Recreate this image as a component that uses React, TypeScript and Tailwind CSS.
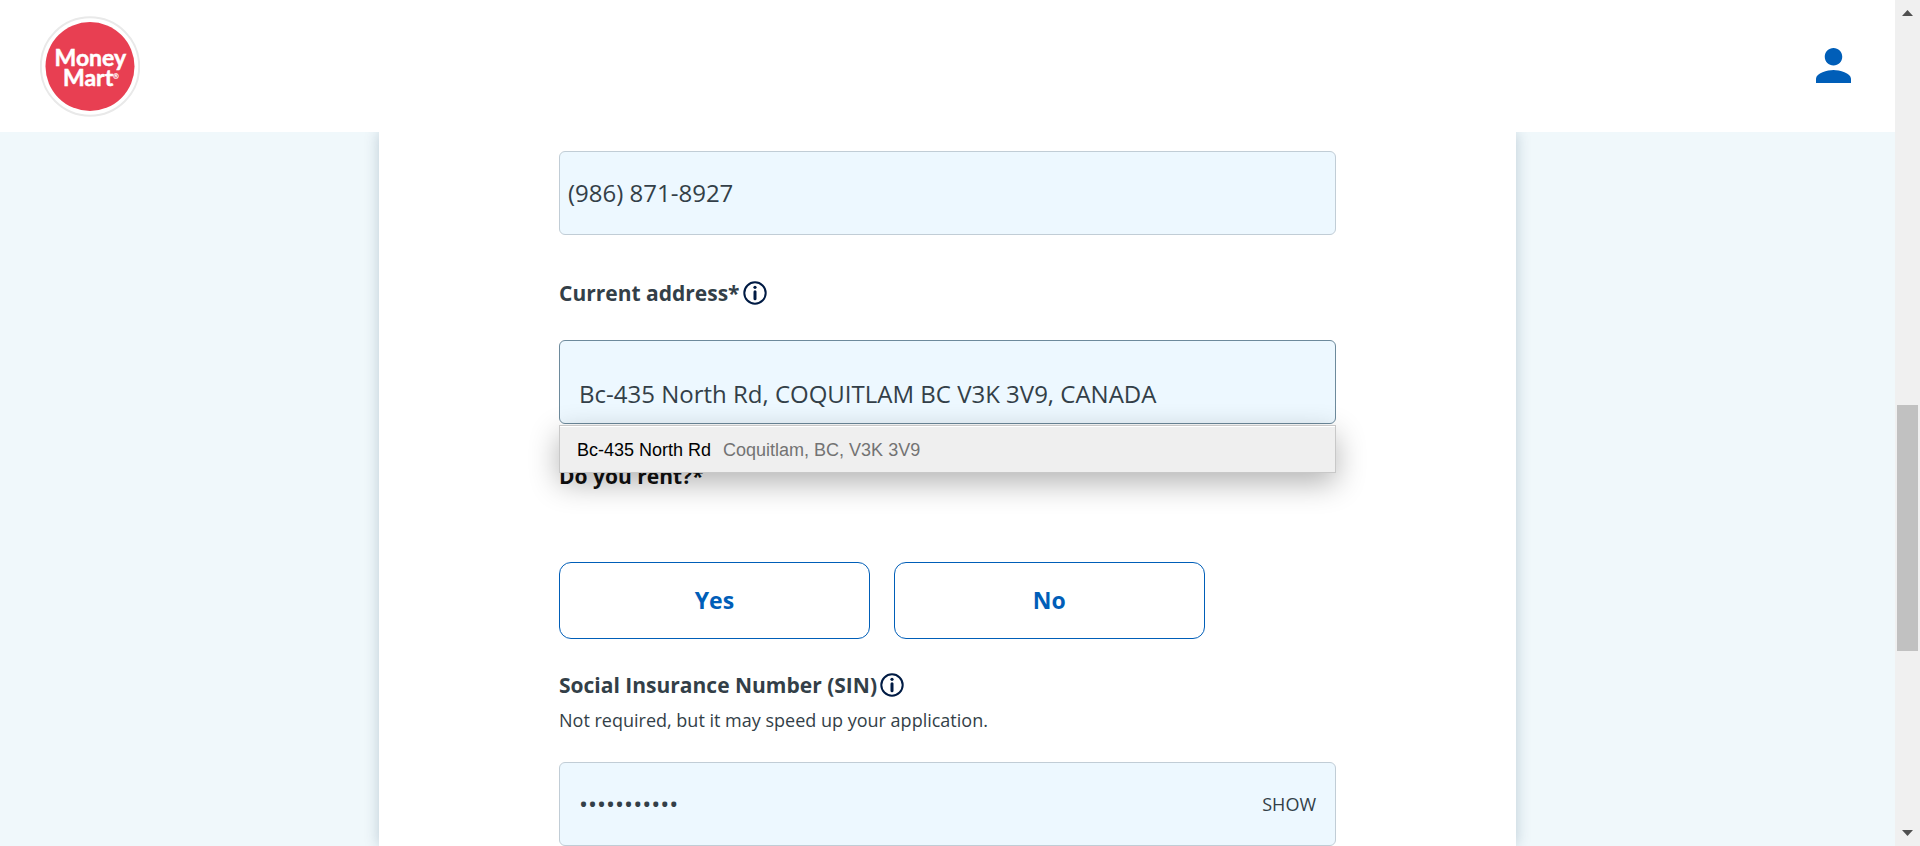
import { useState } from "react";

function Logo() {
  return (
    <svg viewBox="0 0 100 102" className="h-[102px] w-[100px]" role="img" aria-label="Money Mart">
      <circle cx="50" cy="51.500" r="49.200" fill="#fff" stroke="#e9e9e9" strokeWidth="2" />
      <circle cx="50" cy="51.500" r="44.500" fill="#e83f52" />
      <g fill="#fff" stroke="#fff" strokeWidth="0.500" fontFamily="Lato, 'Open Sans', sans-serif" fontWeight="700">
        <text x="14.500" y="51" fontSize="23">Money</text>
        <text x="23" y="71" fontSize="23">Mart</text>
        <text x="73" y="64" fontSize="7" fontWeight="400" strokeWidth="0.200">®</text>
      </g>
    </svg>
  );
}

function UserIcon() {
  return (
    <svg viewBox="4 4 16 16" className="size-[35px]" fill="#005eb8" aria-hidden="true">
      <path d="M12 12c2.210 0 4-1.790 4-4s-1.790-4-4-4-4 1.790-4 4 1.790 4 4 4zm0 2c-2.670 0-8 1.340-8 4v2h16v-2c0-2.660-5.330-4-8-4z" />
    </svg>
  );
}

function InfoButton({ label }: { label: string }) {
  return (
    <button type="button" aria-label={label} className="size-6">
      <svg viewBox="0 0 24 24" className="size-6" fill="none" stroke="#001b44" aria-hidden="true">
        <circle cx="12" cy="12" r="10.700" strokeWidth="2" />
        <path d="M12 10.800v7" strokeWidth="3" strokeLinecap="round" />
        <circle cx="12" cy="6.300" r="1.600" fill="#001b44" stroke="none" />
      </svg>
    </button>
  );
}

function Scrollbar() {
  return (
    <div className="flex w-[25px] shrink-0 flex-col items-center justify-between bg-[#f0f0f0] py-2.5" aria-hidden="true">
      <svg viewBox="0 0 11 6" className="h-1.5 w-[11px]" fill="#505050">
        <path d="M0 6L5.500 0L11 6z" />
      </svg>
      <div className="flex w-full flex-1 flex-col px-0.5">
        <div className="grow-[389]" />
        <div className="grow-[246] bg-[#c1c1c1]" />
        <div className="grow-[179]" />
      </div>
      <svg viewBox="0 0 11 6" className="h-1.5 w-[11px]" fill="#505050">
        <path d="M0 0L5.500 6L11 0z" />
      </svg>
    </div>
  );
}

export default function App() {
  const [phone, setPhone] = useState("(986) 871-8927");
  const [address, setAddress] = useState("Bc-435 North Rd, COQUITLAM BC V3K 3V9, CANADA");
  const [sin, setSin] = useState("123-456-789");
  const [visible, setVisible] = useState(false);

  return (
    <div className="flex h-screen overflow-hidden bg-white font-['Open_Sans',sans-serif] text-[#333f48]">
      <div className="flex min-w-0 flex-1 flex-col">
        <header className="z-10 flex h-[132px] shrink-0 items-center justify-between bg-white pr-11 pl-10">
          <a href="#home">
            <Logo />
          </a>
          <button type="button" aria-label="Account" className="pb-0.5">
            <UserIcon />
          </button>
        </header>
        <main className="flex min-h-0 flex-1 justify-center overflow-hidden bg-[#f0f8fb]">
          <form className="w-3/5 bg-white px-[180px] pt-[19px] shadow-[0_0_14px_rgba(0,50,80,0.22)]">
            <input
              type="tel"
              aria-label="Phone number"
              value={phone}
              onChange={(e) => setPhone(e.target.value)}
              className="block h-[84px] w-full rounded-md border border-[#c1cdd6] bg-[#edf8ff] px-2 pb-0.5 text-2xl outline-none"
            />

            <div className="mt-11 flex h-7 items-center gap-[3px]">
              <label htmlFor="address" className="pt-0.5 text-[21px] font-bold">
                Current address*
              </label>
              <InfoButton label="About current address" />
            </div>
            <div className="relative mt-[33px]">
              <input
                id="address"
                type="text"
                value={address}
                onChange={(e) => setAddress(e.target.value)}
                className="block h-[84px] w-full rounded-md border border-[#6d8a9c] bg-[#edf8ff] px-[19px] pt-[22px] text-2xl outline-none"
              />
              <ul className="absolute inset-x-0 top-full mt-px border border-[#c8c8c8] bg-white pt-px font-['Liberation_Sans',sans-serif] text-lg shadow-[0_10px_30px_rgba(0,0,0,0.3)]">
                <li>
                  <button type="button" className="flex h-[45px] w-full items-center gap-3 bg-[#efefef] px-[17px]">
                    <span className="text-black">Bc-435 North Rd</span>
                    <span className="text-[#737373]">Coquitlam, BC, V3K 3V9</span>
                  </button>
                </li>
              </ul>
            </div>

            <fieldset className="mt-[38px]">
              <legend className="h-7 text-[21px] leading-7 font-bold text-[#111]">Do you rent?*</legend>
              <div className="mt-[72px] flex gap-6">
                <button type="button" className="h-[77px] w-2/5 rounded-xl border border-[#005eb8] text-[23px] font-bold text-[#005eb8]">
                  Yes
                </button>
                <button type="button" className="h-[77px] w-2/5 rounded-xl border border-[#005eb8] text-[23px] font-bold text-[#005eb8]">
                  No
                </button>
              </div>
            </fieldset>

            <div className="mt-8 flex h-7 items-center gap-[3px]">
              <label htmlFor="sin" className="pt-0.5 text-[21px] font-bold">
                Social Insurance Number (SIN)
              </label>
              <InfoButton label="About your SIN" />
            </div>
            <p className="mt-[7px] h-7 text-lg">Not required, but it may speed up your application.</p>
            <div className="mt-7 flex h-[84px] items-center rounded-md border border-[#c1cdd6] bg-[#edf8ff] px-[19px]">
              <input
                id="sin"
                type={visible ? "text" : "password"}
                value={sin}
                onChange={(e) => setSin(e.target.value)}
                className="min-w-0 flex-1 bg-transparent text-2xl outline-none"
              />
              <button type="button" onClick={() => setVisible(!visible)} className="text-lg">
                SHOW
              </button>
            </div>
          </form>
        </main>
      </div>
      <Scrollbar />
    </div>
  );
}
